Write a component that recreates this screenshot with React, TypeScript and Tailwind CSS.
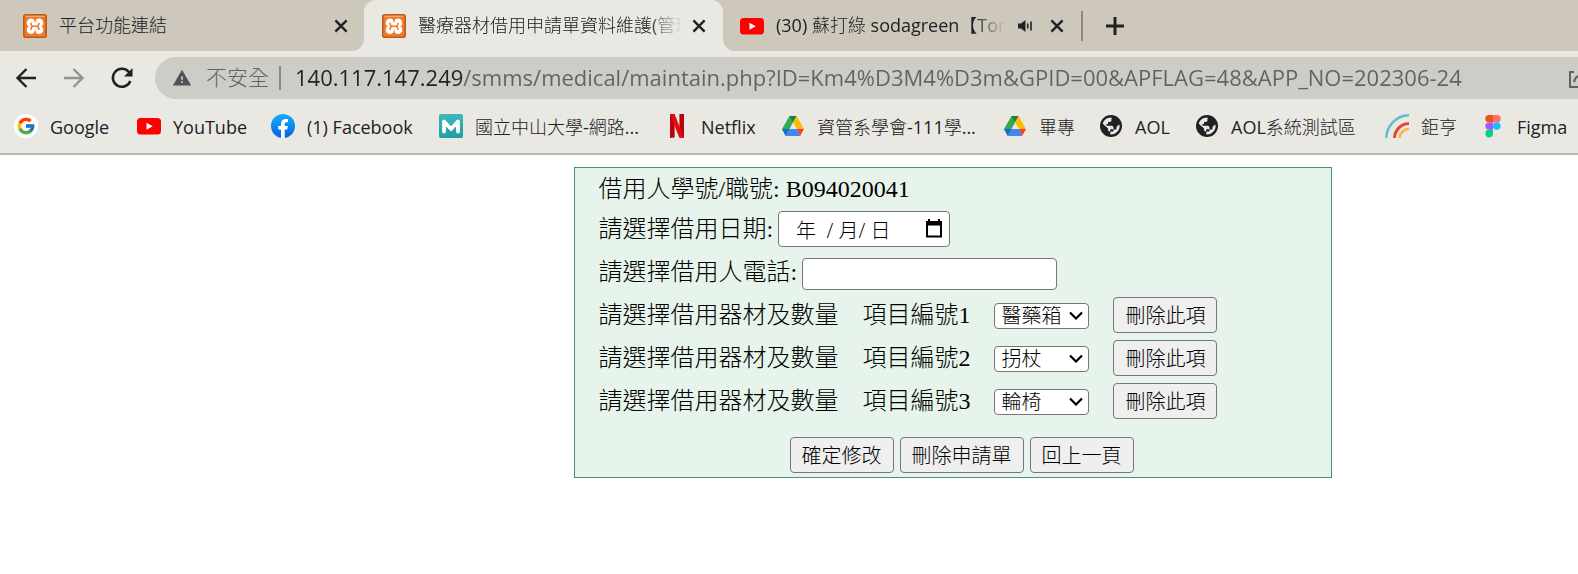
import type { ReactNode } from "react";
import { FcGoogle } from "react-icons/fc";
import { MdWarning } from "react-icons/md";

const ui = "font-['Open_Sans','Noto_Sans_CJK_TC_Light','Noto_Sans_CJK_TC',sans-serif]";

function Xampp() {
  return (
    <svg viewBox="0 0 24 24" className="size-6 shrink-0">
      <rect x=".8" y=".8" width="22.400" height="22.400" rx="2" fill="#f37a24" stroke="#bf5a1a" strokeWidth="1.600" />
      <path d="M2.500 2.300h19" stroke="#f9b487" strokeWidth="1" />
      <g fill="#fff">
        <circle cx="8" cy="8.900" r="4.300" />
        <circle cx="16" cy="8.900" r="4.300" />
        <circle cx="8" cy="15.800" r="4.300" />
        <circle cx="16" cy="15.800" r="4.300" />
        <path d="M8 8h8v8.500H8z" />
      </g>
      <path d="M12 4v4M12 20.500v-4" stroke="#f37a24" strokeWidth="1.200" />
      <path
        d="M8 8.800c0 2 1 3.500 2.500 3.500h3c1.500 0 2.500-1.500 2.500-3.500M8 15.900c0-2 1-3.600 2.500-3.600M16 15.900c0-2-1-3.600-2.500-3.600"
        fill="none"
        stroke="#f37a24"
        strokeWidth="1.500"
      />
    </svg>
  );
}

function YouTube() {
  return (
    <svg viewBox="0 0 24 24" className="size-6 shrink-0">
      <rect y="4" width="24" height="16.500" rx="3.500" fill="#f00" />
      <path d="M9.500 8.800v7l6.200-3.500z" fill="#fff" />
    </svg>
  );
}

function Drive() {
  return (
    <svg viewBox="0 0 24 24" className="size-6 shrink-0">
      <path d="M8.500 2h7L12 8.200 4.900 22 1 15z" fill="#34a853" />
      <path d="M8.500 2h7L12 8.200z" fill="#188038" />
      <path d="M15.500 2 23 15h-7L12 8.200z" fill="#fbbc04" />
      <path d="M1 15h7l-3.100 7z" fill="#1967d2" />
      <path d="M8 15h8l3.100 7H4.900z" fill="#4285f4" />
      <path d="M16 15h7l-3.900 7z" fill="#ea4335" />
    </svg>
  );
}

function Google() {
  return (
    <span className="flex size-6 shrink-0 items-center justify-center rounded-full bg-white">
      <FcGoogle className="size-5" />
    </span>
  );
}

function Facebook() {
  return (
    <svg viewBox="0 0 24 24" className="size-6 shrink-0">
      <defs>
        <linearGradient id="blue" x2="0" y2="1">
          <stop stopColor="#19aefb" />
          <stop offset="1" stopColor="#0364e3" />
        </linearGradient>
      </defs>
      <circle cx="12" cy="12" r="12" fill="url(#blue)" />
      <path
        d="M10 24v-8.400H7.200V12H10V9.800c0-3.200 1.800-4.900 4.700-4.900.9 0 1.800.1 2.300.3v3.100h-1.500c-1.300 0-1.800.7-1.800 1.900V12h3.200l-.6 3.600h-2.600V24c-.6.1-2.500.1-3.700 0z"
        fill="#fff"
      />
    </svg>
  );
}

function Moodle() {
  return (
    <svg viewBox="0 0 24 24" className="size-6 shrink-0">
      <defs>
        <linearGradient id="teal" x2="0" y2="1">
          <stop stopColor="#3bb9bd" />
          <stop offset="1" stopColor="#1f9fa3" />
        </linearGradient>
      </defs>
      <rect width="24" height="24" rx="2" fill="url(#teal)" />
      <path d="M5 17.500V7.500l7 7.500 7-7.500v10" fill="none" stroke="#fff" strokeWidth="3.800" strokeLinejoin="round" strokeLinecap="round" />
    </svg>
  );
}

function Netflix() {
  return (
    <svg viewBox="0 0 24 24" className="size-6 shrink-0">
      <path d="M5 0h4.600v23.600L5 24zM14.400 0H19v24l-4.600-.5z" fill="#b1060f" />
      <path d="M5 0h4.600L19 24l-4.800-.6z" fill="#e50914" />
    </svg>
  );
}

function Globe() {
  return (
    <svg viewBox="0 0 24 24" className="size-6 shrink-0">
      <circle cx="12" cy="12" r="11" fill="#202124" />
      <path
        d="M12.500 3.500v2.800c0 1-.8 1.700-1.800 1.700H9v2H7.500v1.700h5c1.200 0 2 .8 2 2v1.500h-3.300v3H13v2c-.6.100-1.200.1-1.800 0v-2.400c-1.300 0-2.200-.9-2.200-2.200v-1.100l-5.200-4.700C4.500 6.200 8 3.400 12.500 3.500z"
        fill="#e9e8e3"
      />
      <path d="M20.500 10.800c.6 3.700-1.300 7-4.500 8.600-1.400.7-2.600.9-4 .8v-2.600h2.500v-2.200h2.800c0-2.600 1.200-4 3.200-4.600z" fill="#e9e8e3" />
    </svg>
  );
}

function Arcs() {
  return (
    <svg viewBox="0 0 24 24" className="size-6 shrink-0" fill="none">
      <path d="M1.300 24A23 23 0 0 1 24 1.300" stroke="#62bccb" strokeWidth="2.500" />
      <path d="M9.500 24A15 15 0 0 1 24 9.500" stroke="#e0492f" strokeWidth="3" />
      <path d="M14.500 24a10 10 0 0 1 9.500-9.300" stroke="#fbb440" strokeWidth="2.500" />
    </svg>
  );
}

function Figma() {
  return (
    <svg viewBox="0 0 24 24" className="size-6 shrink-0">
      <path d="M12 1H8a3.700 3.700 0 0 0 0 7.400h4z" fill="#f24e1e" />
      <path d="M12 1h4a3.700 3.700 0 0 1 0 7.400h-4z" fill="#ff7262" />
      <path d="M12 8.400H8a3.700 3.700 0 0 0 0 7.400h4z" fill="#a259ff" />
      <circle cx="15.800" cy="12.100" r="3.800" fill="#1abcfe" />
      <path d="M12 15.800H8a3.800 3.800 0 1 0 4 3.800z" fill="#0acf83" />
    </svg>
  );
}

const bookmarks: { label: string; icon: ReactNode; size: string }[] = [
  { label: "Google", icon: <Google />, size: "w-[123px]" },
  { label: "YouTube", icon: <YouTube />, size: "w-[134px]" },
  { label: "(1) Facebook", icon: <Facebook />, size: "w-[168px]" },
  { label: "國立中山大學-網路...", icon: <Moodle />, size: "w-[226px]" },
  { label: "Netflix", icon: <Netflix />, size: "w-[116px]" },
  { label: "資管系學會-111學...", icon: <Drive />, size: "w-[222px]" },
  { label: "畢專", icon: <Drive />, size: "w-[96px]" },
  { label: "AOL", icon: <Globe />, size: "w-[96px]" },
  { label: "AOL系統測試區", icon: <Globe />, size: "w-[190px]" },
  { label: "鉅亨", icon: <Arcs />, size: "w-[96px]" },
  { label: "Figma", icon: <Figma />, size: "w-[97px]" },
];

function Close() {
  return (
    <button type="button" aria-label="關閉分頁" className="shrink-0 text-[#202124]">
      <svg viewBox="0 0 20 20" className="size-5" stroke="currentColor" strokeWidth="2.400">
        <path d="m4.400 4.400 11.200 11.200M15.600 4.400 4.400 15.600" />
      </svg>
    </button>
  );
}

function TabTitle({ children, fade }: { children: ReactNode; fade?: boolean }) {
  return (
    <span
      className={
        fade
          ? "ml-3 min-w-0 flex-1 overflow-hidden whitespace-nowrap [mask-image:linear-gradient(to_right,black_86%,transparent)]"
          : "ml-3 min-w-0 flex-1 overflow-hidden whitespace-nowrap"
      }
    >
      {children}
    </span>
  );
}

function TabStrip() {
  return (
    <nav className="flex h-[51px] bg-[#e9e8e3] text-[18px] text-[#202124]">
      <div className="flex w-[364px] shrink-0 items-center rounded-br-xl bg-[#cdc8bb] pr-[13px] pl-[23px]">
        <Xampp />
        <TabTitle>平台功能連結</TabTitle>
        <Close />
      </div>
      <div className="flex w-[359px] shrink-0 bg-[#cdc8bb]">
        <div className="flex w-full items-center rounded-t-xl bg-[#e9e8e3] pr-[14px] pl-[18px]">
          <Xampp />
          <TabTitle fade>醫療器材借用申請單資料維護(管理</TabTitle>
          <span className="ml-1.5 flex"><Close /></span>
        </div>
      </div>
      <div className="flex min-w-0 flex-1 items-center rounded-bl-xl bg-[#cdc8bb]">
        <div className="flex h-[30px] w-[360px] shrink-0 items-center border-r-2 border-[#8b887f] pr-[14px] pl-[17px]">
          <YouTube />
          <TabTitle fade>(30) 蘇打綠 sodagreen【Tom</TabTitle>
          <svg viewBox="0 0 16 16" className="ml-3 size-4 shrink-0" fill="#202124">
            <path d="M1 5.500h3L8.500 2v12L4 10.500H1z" />
            <path d="M10 5.500h1.500v5H10zM13.200 3.500h1.600v9h-1.600z" />
          </svg>
          <span className="ml-3.5 flex"><Close /></span>
        </div>
        <button type="button" aria-label="新增分頁" className="ml-5 text-[#202124]">
          <svg viewBox="0 0 24 24" className="size-6" stroke="currentColor" strokeWidth="3">
            <path d="M12 3v18M3 12h18" />
          </svg>
        </button>
      </div>
    </nav>
  );
}

function Toolbar() {
  return (
    <div className="flex h-12 items-center bg-[#e9e8e3] pt-1.5 pl-3.5 text-[#202124]">
      <div className="flex w-[141px] shrink-0 items-center gap-6">
        <button type="button" aria-label="上一頁">
          <svg viewBox="0 0 24 24" className="size-6" fill="none" stroke="currentColor" strokeWidth="2.400">
            <path d="M22 12H4M12.500 3 3.500 12l9 9" />
          </svg>
        </button>
        <button type="button" aria-label="下一頁" className="text-[#939390]">
          <svg viewBox="0 0 24 24" className="size-6" fill="none" stroke="currentColor" strokeWidth="2.400">
            <path d="M2 12h18M11.500 3l9 9-9 9" />
          </svg>
        </button>
        <button type="button" aria-label="重新載入">
          <svg viewBox="0 0 24 24" className="size-6" fill="none" stroke="currentColor" strokeWidth="2.500">
            <path d="M20.300 15A9 9 0 1 1 18.500 5.700L20.500 7.700" />
            <path d="M22.500 2v8.500H14z" fill="currentColor" stroke="none" />
          </svg>
        </button>
      </div>
      <div className="flex h-[42px] min-w-0 flex-1 items-center overflow-hidden rounded-l-full bg-[#cdccc7] pl-[17px]">
        <MdWarning className="size-5 shrink-0 text-[#505357]" />
        <span className="ml-3.5 shrink-0 text-[21px] text-[#5f6368]">不安全</span>
        <span className="mr-3.5 ml-2.5 h-6 w-0.5 shrink-0 bg-[#87888a]" />
        <input
          type="text"
          aria-label="網址"
          defaultValue="140.117.147.249/smms/medical/maintain.php?ID=Km4%D3M4%D3m&GPID=00&APFLAG=48&APP_NO=202306-24"
          className="min-w-0 flex-1 bg-[linear-gradient(to_right,#202124_168px,#5f6266_168px)] bg-clip-text pb-0.5 text-[22px] text-transparent outline-none"
        />
        <svg viewBox="0 0 24 24" className="-mr-3.5 size-6 shrink-0" fill="none" stroke="#5f6368" strokeWidth="2">
          <path d="M6 6H2v15h16v-5" />
          <path d="M6 16c1-5 4-7 9-7V5l6 6-6 5v-4" />
        </svg>
      </div>
    </div>
  );
}

function Bookmarks() {
  return (
    <nav className="flex h-14 items-center overflow-hidden border-b-2 border-[#b9b9b7] bg-[#e9e8e3] pl-3.5 text-[18px] text-[#202124]">
      {bookmarks.map((b) => (
        <div key={b.label} className={b.size + " shrink-0"}>
          <a href="#" className="flex items-center gap-3 whitespace-nowrap">
            {b.icon}
            <span className="pt-0.5">{b.label}</span>
          </a>
        </div>
      ))}
    </nav>
  );
}

function FormButton({ children }: { children: ReactNode }) {
  return (
    <button type="button" className="h-9 rounded border border-[#767676] bg-[#efefef] px-[11px] pt-0.5 text-[20px] leading-none whitespace-nowrap">
      {children}
    </button>
  );
}

const items = ["醫藥箱", "拐杖", "輪椅"];

function LoanForm() {
  return (
    <form className="mt-3 ml-[36.4%] w-[48%] border border-[#4b9073] bg-[#e7f4eb] pr-1.5 pb-1 pl-[23px] font-['Liberation_Serif','Noto_Sans_CJK_TC',serif] text-[24px] leading-[41px] font-light whitespace-nowrap text-black">
      <div className="h-[39px] pt-px">借用人學號/職號: B094020041</div>
      <div className="flex h-[43px] items-center gap-[5px]">
        <label htmlFor="date" className="pt-0.5">請選擇借用日期:</label>
        <div className="flex h-9 w-[172px] items-center rounded border border-[#767676] bg-white pr-1.5 pl-[17px]">
          <input id="date" type="text" defaultValue="年  / 月/ 日" className={ui + " min-w-0 flex-1 pt-0.5 text-[20px] leading-none outline-none"} />
          <button type="button" aria-label="選擇日期">
            <svg viewBox="0 0 18 20" className="h-5 w-[18px]">
              <path d="M4 0v2M14 0v2" stroke="#000" strokeWidth="2" />
              <path d="M2 3h14v14.500H2z" fill="none" stroke="#000" strokeWidth="2" />
              <path d="M1 2h16v4.500H1z" />
            </svg>
          </button>
        </div>
      </div>
      <div className="flex h-[43px] items-center gap-[5px] pt-0.5">
        <label htmlFor="phone">請選擇借用人電話:</label>
        <input id="phone" type="tel" className="mt-0.5 h-8 w-[255px] rounded border border-[#767676] bg-white px-1 text-[20px]" />
      </div>
      {items.map((item, i) => (
        <div key={item} className="flex h-[43px] items-center">
          <span className="pt-0.5">請選擇借用器材及數量</span>
          <label htmlFor={"item" + i} className="ml-6 w-[107px] pt-0.5">項目編號{i + 1}</label>
          <span className="relative ml-[25px] flex w-[95px] items-center pt-0.5">
            <select
              id={"item" + i}
              defaultValue={item}
              className={ui + " h-[26px] w-full appearance-none rounded border border-[#767676] bg-white pl-1.5 text-[20px] leading-none"}
            >
              {items.map((name) => (
                <option key={name}>{name}</option>
              ))}
            </select>
            <svg viewBox="0 0 14 9" className="pointer-events-none absolute right-1.5 h-[9px] w-3.5" fill="none" stroke="#000" strokeWidth="2.200">
              <path d="M1 1.500l6 6 6-6" />
            </svg>
          </span>
          <span className={ui + " ml-6 flex"}>
            <FormButton>刪除此項</FormButton>
          </span>
        </div>
      ))}
      <div className={ui + " mt-[15px] flex justify-center gap-1.5"}>
        <FormButton>確定修改</FormButton>
        <FormButton>刪除申請單</FormButton>
        <FormButton>回上一頁</FormButton>
      </div>
    </form>
  );
}

export default function App() {
  return (
    <div className="min-h-screen bg-white">
      <header className={ui}>
        <TabStrip />
        <Toolbar />
        <Bookmarks />
      </header>
      <main>
        <LoanForm />
      </main>
    </div>
  );
}
